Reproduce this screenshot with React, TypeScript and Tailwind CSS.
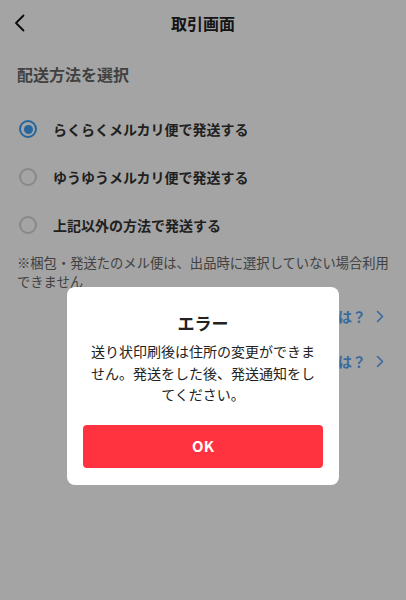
import { useState } from "react";

const options = [
  "らくらくメルカリ便で発送する",
  "ゆうゆうメルカリ便で発送する",
  "上記以外の方法で発送する",
];

const links = ["らくらくメルカリ便とは？", "ゆうゆうメルカリ便とは？"];

function Radio({ checked }: { checked: boolean }) {
  return (
    <span
      className={`flex h-[18px] w-[18px] shrink-0 items-center justify-center rounded-full border-2 ${
        checked ? "border-[#3b9ff4]" : "border-[#d4d4d4]"
      }`}
    >
      {checked && <span className="h-[9px] w-[9px] rounded-full bg-[#3b9ff4]" />}
    </span>
  );
}

export default function App() {
  const [selected, setSelected] = useState(0);

  return (
    <div className="relative h-[600px] w-full overflow-hidden bg-white font-['Noto_Sans_CJK_JP','Noto_Sans',sans-serif] text-[#333]">
      {/* header */}
      <header className="relative flex h-[46px] items-center justify-center">
        <button className="absolute left-[13px] top-[14px] p-0" aria-label="戻る">
          <svg width="14" height="18" viewBox="0 0 14 18" fill="none">
            <path d="M10.5 1.5 3 9l7.5 7.5" stroke="#111" strokeWidth="1.8" strokeLinecap="round" strokeLinejoin="round" />
          </svg>
        </button>
        <h1 className="text-[16px] font-bold leading-6 text-[#222]">取引画面</h1>
      </header>

      <h2 className="mt-4 px-[17px] text-[16px] font-bold leading-6 text-[#666]">配送方法を選択</h2>

      <ul className="mt-[19px]">
        {options.map((label, i) => (
          <li
            key={label}
            onClick={() => setSelected(i)}
            className="flex h-12 cursor-pointer items-center gap-[16px] pl-[19px]"
          >
            <Radio checked={selected === i} />
            <span className="text-[14px] font-bold leading-5 text-[#333]">{label}</span>
          </li>
        ))}
      </ul>

      <p className="mt-1 pl-[17px] pr-[8px] text-[13.3px] leading-[19px] text-[#666]">
        ※梱包・発送たのメル便は、出品時に選択していない場合利用できません
      </p>

      <div className="mt-[15px] flex flex-col items-end gap-[25px] pr-[22px]">
        {links.map((l) => (
          <a key={l} className="flex h-5 items-center gap-[10px] text-[14px] font-bold text-[#5aa6f2]">
            {l}
            <svg width="8" height="13" viewBox="0 0 8 13" fill="none">
              <path d="M1.5 1.5 6.5 6.5l-5 5" stroke="#5aa6f2" strokeWidth="1.6" strokeLinecap="round" strokeLinejoin="round" />
            </svg>
          </a>
        ))}
      </div>

      {/* modal */}
      <div className="absolute inset-0 bg-black/[0.355]" />
      <div className="absolute left-1/2 top-[287px] w-[272px] -translate-x-1/2 rounded-[8px] bg-white px-4 pb-[17px] pt-[23px] text-center">
        <h3 className="text-[17px] font-bold leading-[26px] text-[#222]">エラー</h3>
        <p className="mt-[5px] px-1 text-[14px] leading-[21.5px] text-[#222]">
          送り状印刷後は住所の変更ができません。発送をした後、発送通知をしてください。
        </p>
        <button className="mt-[19px] flex h-[43px] w-full items-center justify-center rounded-[4px] bg-[#ff333f] text-[15px] font-bold text-white">
          OK
        </button>
      </div>
    </div>
  );
}
